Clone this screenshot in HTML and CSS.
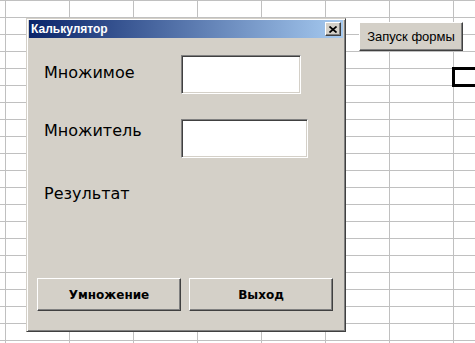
FILE: index.html
```html
<!DOCTYPE html>
<html lang="ru">
<head>
    <meta charset="UTF-8">
    <title>Калькулятор</title>
    <link rel="stylesheet" href="styles.css">
</head>
<body>

    <div class="sheet">
        <button class="sheet-button" type="button">Запуск формы</button>
        <div class="active-cell"></div>

        <div class="dialog">
            <div class="titlebar">
                <span class="title">Калькулятор</span>
                <button class="close" type="button">
                    <svg width="8" height="7" viewBox="0 0 8 7">
                        <path d="M0.5 0.5 L7.5 6.5 M7.5 0.5 L0.5 6.5" stroke="#000" stroke-width="1.7" fill="none"/>
                    </svg>
                </button>
            </div>

            <div class="dialog-body">
                <div class="field field-first">
                    <label for="a">Множимое</label>
                    <input type="text" id="a" class="box box-short">
                </div>
                <div class="field field-second">
                    <label for="b">Множитель</label>
                    <input type="text" id="b" class="box box-long">
                </div>
                <div class="result">Результат</div>

                <div class="actions">
                    <button type="button" class="push">Умножение</button>
                    <button type="button" class="push">Выход</button>
                </div>
            </div>
        </div>
    </div>

</body>
</html>
```

FILE: styles.css
```css
body {
    margin: 0;
    background-color: #fff;
    font-family: 'DejaVu Sans', sans-serif;
}

.sheet {
    position: relative;
    width: 475px;
    height: 343px;
    overflow: hidden;
    background-color: #fff;
    background-image:
        linear-gradient(to right, #c0c0c0 1px, transparent 1px),
        linear-gradient(to bottom, #c0c0c0 1px, transparent 1px);
    background-size: 64px 17px;
    background-position: 5px 0;
}

/* button and selection sitting on the worksheet */
.sheet-button {
    position: absolute;
    left: 359px;
    top: 22px;
    width: 104px;
    height: 29px;
    padding: 0;
    background-color: #d4d0c8;
    border: 1px solid;
    border-color: #fff #404040 #404040 #fff;
    box-shadow: inset -1px -1px #808080;
    font-family: 'Liberation Sans', sans-serif;
    font-size: 13px;
    color: #000;
}

.active-cell {
    position: absolute;
    left: 452px;
    top: 67px;
    width: 40px;
    height: 20px;
    box-sizing: border-box;
    border: 3px solid #000;
    background-color: #fff;
}

/* the form window */
.dialog {
    position: absolute;
    left: 26px;
    top: 18px;
    width: 320px;
    height: 314px;
    box-sizing: border-box;
    display: flex;
    flex-direction: column;
    padding: 1px 2px 2px 2px;
    background-color: #d4d0c8;
    border: 1px solid;
    border-color: #d4d0c8 #404040 #404040 #d4d0c8;
    box-shadow: inset 1px 1px #fff, inset -1px -1px #808080;
}

.titlebar {
    height: 18px;
    display: flex;
    align-items: center;
    justify-content: space-between;
    padding: 0 2px;
    background: linear-gradient(to right, #0a246a, #a6caf0);
}

.title {
    color: #fff;
    font-family: 'Liberation Sans', sans-serif;
    font-weight: bold;
    font-size: 12px;
}

.close {
    width: 16px;
    height: 14px;
    padding: 0;
    display: flex;
    align-items: center;
    justify-content: center;
    background-color: #d4d0c8;
    border: 1px solid;
    border-color: #fff #404040 #404040 #fff;
    box-shadow: inset -1px -1px #808080;
}

.dialog-body {
    flex: 1;
    display: flex;
    flex-direction: column;
    padding: 17px 8px 18px 8px;
}

.field {
    display: flex;
    align-items: flex-start;
}

.field label,
.result {
    width: 137px;
    margin-left: 7px;
    font-size: 16px;
    line-height: 19px;
    color: #000;
}

.field-first label {
    margin-top: 8px;
}

.field-second {
    margin-top: 25px;
}

.field-second label {
    margin-top: 2px;
}

.result {
    margin-top: 26px;
}

.box {
    height: 39px;
    box-sizing: border-box;
    margin: 0;
    padding: 2px 4px;
    background-color: #fff;
    border: 1px solid;
    border-color: #808080 #fff #fff #808080;
    box-shadow: inset 1px 1px #404040, inset -1px -1px #d4d0c8;
    font-family: 'DejaVu Sans', sans-serif;
    font-size: 14px;
    outline: none;
}

.box-short {
    width: 120px;
}

.box-long {
    width: 127px;
}

.actions {
    margin-top: auto;
    display: flex;
    gap: 8px;
}

.push {
    width: 144px;
    height: 33px;
    padding: 0;
    background-color: #d4d0c8;
    border: 1px solid;
    border-color: #fff #404040 #404040 #fff;
    box-shadow: inset -1px -1px #808080;
    font-family: 'DejaVu Sans', sans-serif;
    font-weight: bold;
    font-size: 12px;
    color: #000;
}
```
